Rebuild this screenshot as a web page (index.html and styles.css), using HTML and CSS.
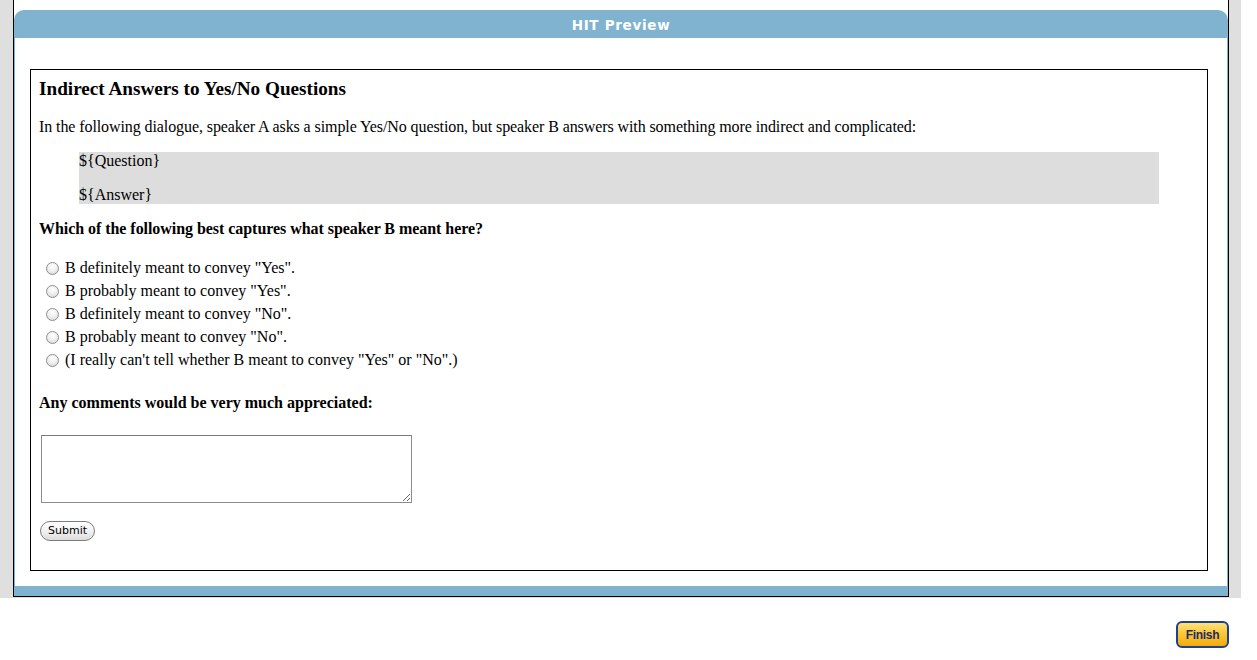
FILE: index.html
```html
<!DOCTYPE html>
<html>
<head>
<meta charset="utf-8">
<title>HIT Preview</title>
<link rel="stylesheet" href="styles.css">
</head>
<body>
<div class="frame">
  <div class="panel">
    <div class="panel-head">HIT Preview</div>
    <div class="panel-body">
      <form class="hit">
        <h3 class="title">Indirect Answers to Yes/No Questions</h3>
        <p class="intro">In the following dialogue, speaker A asks a simple Yes/No question, but speaker B answers with something more indirect and complicated:</p>
        <blockquote class="context">
          <p>${Question}</p>
          <p>${Answer}</p>
        </blockquote>
        <p class="question">Which of the following best captures what speaker B meant here?</p>
        <div class="options">
          <label class="option"><input type="radio" name="meaning" class="radio"><span>B definitely meant to convey "Yes".</span></label>
          <label class="option"><input type="radio" name="meaning" class="radio"><span>B probably meant to convey "Yes".</span></label>
          <label class="option"><input type="radio" name="meaning" class="radio"><span>B definitely meant to convey "No".</span></label>
          <label class="option"><input type="radio" name="meaning" class="radio"><span>B probably meant to convey "No".</span></label>
          <label class="option"><input type="radio" name="meaning" class="radio"><span>(I really can't tell whether B meant to convey "Yes" or "No".)</span></label>
        </div>
        <p class="comments-label">Any comments would be very much appreciated:</p>
        <textarea class="comments"></textarea>
        <button type="button" class="submit">Submit</button>
      </form>
    </div>
    <div class="panel-foot"></div>
  </div>
</div>
<div class="actions">
  <button type="button" class="finish">Finish</button>
</div>
</body>
</html>
```

FILE: styles.css
```css
html, body {
  margin: 0;
  padding: 0;
  background: #ffffff;
}

body {
  width: 1257px;
  font-family: "Liberation Serif", "Times New Roman", serif;
  font-size: 16px;
  color: #000;
}

.frame {
  width: 1241px;
  box-sizing: border-box;
  background: #dfdfdf;
  padding: 0 12px 1px 13px;
}

.panel {
  background: #ffffff;
  border-left: 1px solid #000;
  border-right: 1px solid #000;
  border-bottom: 1px solid #000;
  padding-top: 10px;
}

.panel-head {
  height: 28px;
  background: #7fb3cf;
  border-radius: 10px 10px 0 0;
  color: #ffffff;
  font-family: "DejaVu Sans", Verdana, sans-serif;
  font-weight: bold;
  font-size: 13.5px;
  letter-spacing: 0.7px;
  line-height: 30px;
  text-align: center;
}

.panel-body {
  border-left: 1px solid #7fb3cf;
  border-right: 1px solid #7fb3cf;
  padding: 31px 19px 15px 15px;
}

.panel-foot {
  height: 10px;
  background: #7fb3cf;
}

.hit {
  display: block;
  border: 1px solid #000;
  padding: 8px;
}

.title {
  margin: 0 0 18px;
  font-size: 19.2px;
  line-height: 22px;
  font-weight: bold;
}

.intro {
  margin: 0 0 16px;
  letter-spacing: -0.09px;
}

.context {
  margin: 0 40px;
  background: #dddddd;
}

.context p {
  margin: 16px 0;
}

.context p:first-child {
  margin-top: 0;
}

.context p:last-child {
  margin-bottom: 0;
}

.question {
  margin: 16px 0 0;
  font-weight: bold;
  letter-spacing: -0.05px;
}

.options {
  margin-top: 18px;
  display: flex;
  flex-direction: column;
}

.option {
  height: 23px;
  display: flex;
  align-items: center;
}

.radio {
  appearance: none;
  -webkit-appearance: none;
  width: 13px;
  height: 13px;
  margin: 1px 6px 0 7px;
  border: 1px solid #8d8d8d;
  border-radius: 50%;
  background: radial-gradient(circle at 50% 30%, #ffffff 0%, #f1f1f1 45%, #d4d4d4 100%);
  box-sizing: border-box;
  flex: none;
}

.comments-label {
  margin: 23px 0 0;
  font-weight: bold;
}

.comments {
  display: block;
  width: 371px;
  height: 68px;
  box-sizing: border-box;
  margin: 23px 0 0 2px;
  border: 1px solid #8c8c8c;
  border-top-color: #7a7a7a;
  padding: 2px;
  font-family: "Liberation Mono", monospace;
  font-size: 13px;
}

.submit {
  display: block;
  margin: 18px 0 21px 1px;
  height: 20px;
  padding: 0 7px;
  border: 1px solid #7c7c7c;
  border-radius: 10px;
  background: linear-gradient(#ffffff, #f2f2f2 50%, #dcdcdc);
  font-family: "DejaVu Sans", "Lucida Grande", sans-serif;
  font-size: 11px;
  line-height: 18px;
  color: #000;
}

.actions {
  width: 1257px;
  box-sizing: border-box;
  display: flex;
  justify-content: flex-end;
  padding: 23px 28px 0 0;
}

.finish {
  width: 53px;
  height: 27px;
  box-sizing: border-box;
  border: 2px solid #203f8e;
  border-radius: 6px;
  background: linear-gradient(#ffe27a, #fbc833 45%, #f2ac0c);
  color: #1c2a6b;
  font-family: "Liberation Sans", Arial, sans-serif;
  font-weight: bold;
  font-size: 12px;
  letter-spacing: -0.3px;
  padding: 0;
}
```
